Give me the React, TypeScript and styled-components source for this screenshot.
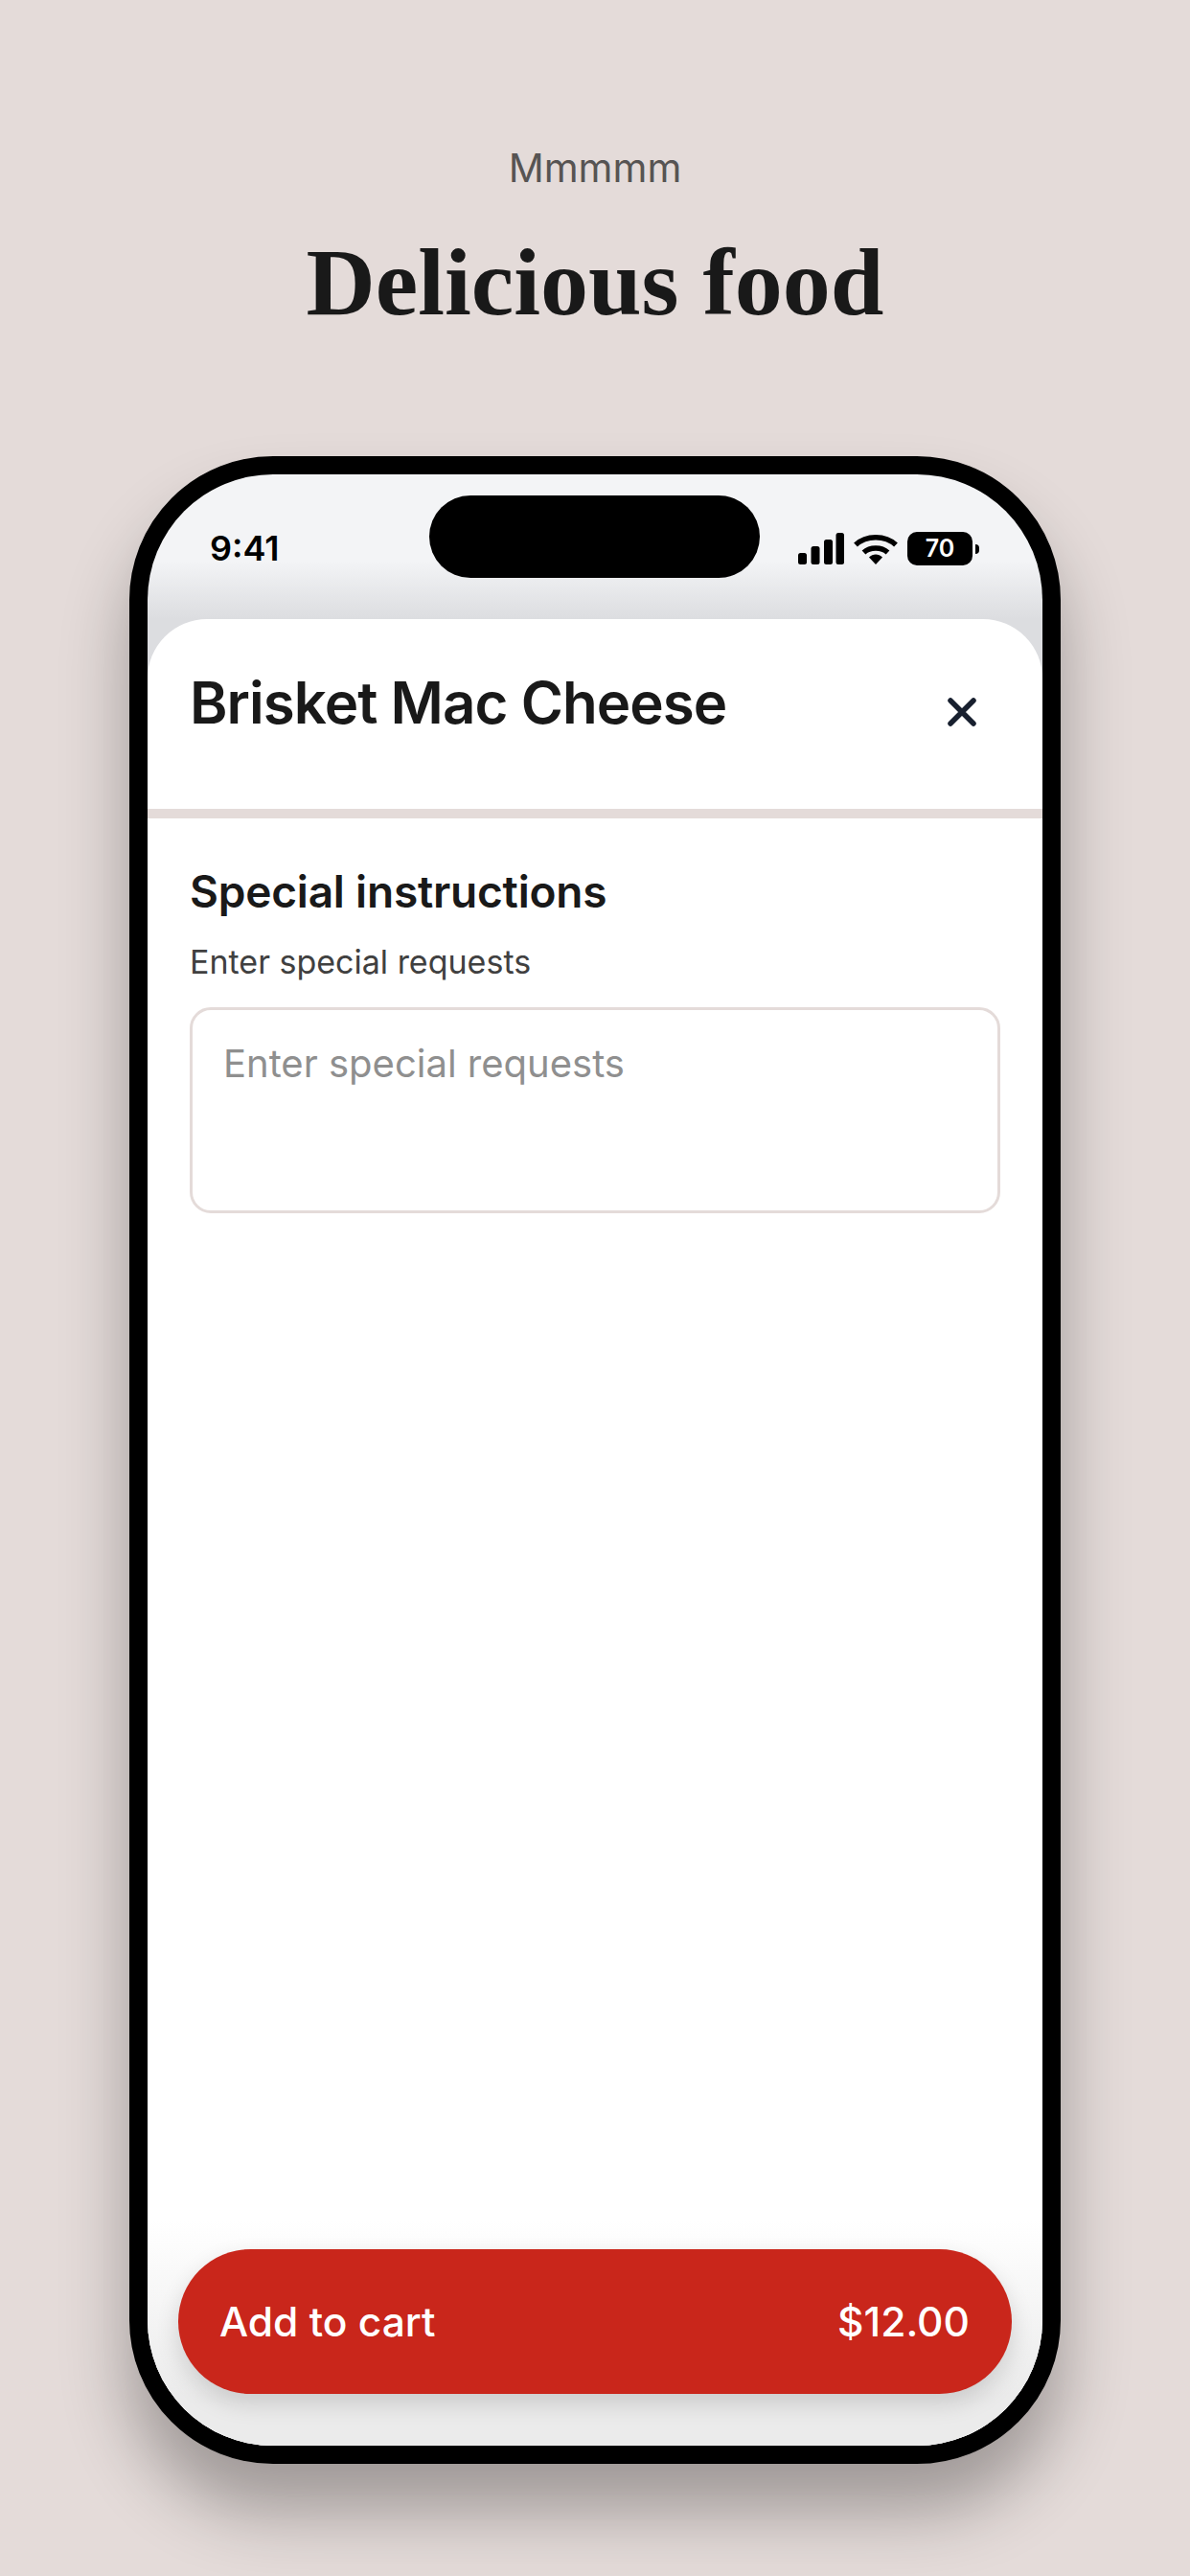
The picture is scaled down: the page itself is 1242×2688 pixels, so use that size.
import React from 'react';
import styled, { createGlobalStyle } from 'styled-components';

const GlobalStyle = createGlobalStyle`
  html, body {
    margin: 0;
    padding: 0;
    background: #e4dbd9;
  }
`;

const Page = styled.div`
  width: 1242px;
  height: 2688px;
  overflow: hidden;
  display: flex;
  flex-direction: column;
  align-items: center;
  background: #e4dbd9;
  font-family: Inter, 'Liberation Sans', sans-serif;
`;

const Eyebrow = styled.div`
  margin-top: 150px;
  height: 50px;
  line-height: 50px;
  font-size: 41px;
  color: #575453;
`;

const Headline = styled.h1`
  margin: 45px 0 0;
  height: 100px;
  line-height: 100px;
  font-family: 'Liberation Serif', serif;
  font-size: 100px;
  font-weight: 700;
  color: #191919;
`;

const Phone = styled.div`
  margin-top: 131px;
  width: 972px;
  height: 2095px;
  box-sizing: border-box;
  border: 19px solid #000;
  border-radius: 150px;
  background: #000;
  box-shadow: 0 50px 70px rgba(0, 0, 0, 0.3);
  flex-shrink: 0;
`;

const Screen = styled.div`
  position: relative;
  height: 100%;
  display: flex;
  flex-direction: column;
  overflow: hidden;
  border-radius: 131px;
  background: linear-gradient(180deg, #f3f4f6 0, #f3f4f6 90px, #dcdde0 151px);
`;

const StatusBar = styled.div`
  height: 151px;
  flex-shrink: 0;
  box-sizing: border-box;
  padding: 55px 73px 0 65px;
  display: flex;
  justify-content: space-between;
  align-items: flex-start;
`;

const Clock = styled.span`
  font-size: 36px;
  line-height: 44px;
  font-weight: 600;
  color: #000;
`;

const Island = styled.div`
  position: absolute;
  top: 22px;
  left: 294px;
  width: 345px;
  height: 86px;
  border-radius: 43px;
  background: #000;
`;

const StatusIcons = styled.div`
  display: flex;
  align-items: center;
  gap: 10px;
  margin-top: 5px;
`;

const Battery = styled.div`
  position: relative;
  width: 68px;
  height: 35px;
  border-radius: 10px;
  background: #000;
  color: #fff;
  font-size: 25px;
  font-weight: 600;
  line-height: 35px;
  text-align: center;
  &::after {
    content: '';
    position: absolute;
    right: -7px;
    top: 13px;
    width: 4px;
    height: 10px;
    border-radius: 0 5px 5px 0;
    background: #000;
  }
`;

const Sheet = styled.div`
  flex: 1;
  display: flex;
  flex-direction: column;
  background: #fff;
  border-radius: 62px 62px 0 0;
`;

const SheetHeader = styled.div`
  height: 208px;
  box-sizing: border-box;
  padding: 51px 68px 0 44px;
  display: flex;
  justify-content: space-between;
  align-items: flex-start;
  border-bottom: 10px solid #e4dbd9;
`;

const SheetTitle = styled.h2`
  margin: 0;
  font-size: 60px;
  letter-spacing: -0.95px;
  line-height: 72px;
  font-weight: 600;
  color: #191919;
`;

const CloseButton = styled.button`
  width: 32px;
  height: 32px;
  margin: 30px 0 0;
  padding: 0;
  border: 0;
  background: none;
  color: #18202f;
  display: flex;
`;

const SheetBody = styled.div`
  padding: 49px 44px 0;
  display: flex;
  flex-direction: column;
`;

const SectionTitle = styled.h3`
  margin: 0;
  font-size: 46px;
  letter-spacing: -0.2px;
  line-height: 54px;
  font-weight: 600;
  color: #191919;
`;

const FieldLabel = styled.label`
  margin-top: 27px;
  font-size: 34px;
  line-height: 40px;
  color: #404040;
`;

const RequestInput = styled.textarea`
  margin-top: 27px;
  height: 215px;
  box-sizing: border-box;
  padding: 32px 32px;
  border: 3px solid #e4dbd9;
  border-radius: 22px;
  resize: none;
  outline: none;
  font-family: inherit;
  font-size: 40px;
  line-height: 48px;
  color: #191919;
  &::placeholder {
    color: #8f8f8f;
    opacity: 1;
  }
`;

const Footer = styled.div`
  position: absolute;
  left: 0;
  right: 0;
  bottom: 0;
  padding: 30px 32px 54px;
  background: linear-gradient(180deg, rgba(235, 235, 235, 0) 0, #ebebeb 78%);
`;

const CartButton = styled.button`
  width: 100%;
  height: 151px;
  padding: 0 44px 0 43px;
  border: 0;
  border-radius: 76px;
  background: #c9261b;
  color: #fff;
  display: flex;
  justify-content: space-between;
  align-items: center;
  font-family: inherit;
  font-size: 42.5px;
  font-weight: 500;
  box-shadow: 0 10px 24px rgba(0, 0, 0, 0.14);
`;

const App = () => (
  <Page>
    <GlobalStyle />
    <Eyebrow>Mmmmm</Eyebrow>
    <Headline>Delicious food</Headline>
    <Phone>
      <Screen>
        <Island />
        <StatusBar>
          <Clock>9:41</Clock>
          <StatusIcons>
            <svg width="48" height="33" viewBox="0 0 48 33" fill="#000">
              <rect x="0" y="21" width="9" height="12" rx="2.5" />
              <rect x="13.5" y="14" width="9" height="19" rx="2.5" />
              <rect x="27" y="7" width="9" height="26" rx="2.5" />
              <rect x="39.5" y="0" width="8.5" height="33" rx="2.5" />
            </svg>
            <svg width="46" height="33" viewBox="0 0 46 33" fill="none" stroke="#000">
              <path d="M2 12.5C13 2 33 2 44 12.5" strokeWidth="5.5" />
              <path d="M10.5 20.5C17 14.5 29 14.5 35.5 20.5" strokeWidth="5.5" />
              <path d="M16 25.5C20 21.5 26 21.5 30 25.5L23 33Z" fill="#000" stroke="none" />
            </svg>
            <Battery>70</Battery>
          </StatusIcons>
        </StatusBar>
        <Sheet>
          <SheetHeader>
            <SheetTitle>Brisket Mac Cheese</SheetTitle>
            <CloseButton aria-label="Close">
              <svg width="32" height="32" viewBox="0 0 32 32" fill="none" stroke="currentColor" strokeWidth="5.5" strokeLinecap="round">
                <path d="M4 4L28 28M28 4L4 28" />
              </svg>
            </CloseButton>
          </SheetHeader>
          <SheetBody>
            <SectionTitle>Special instructions</SectionTitle>
            <FieldLabel>Enter special requests</FieldLabel>
            <RequestInput placeholder="Enter special requests" />
          </SheetBody>
        </Sheet>
        <Footer>
          <CartButton>
            <span>Add to cart</span>
            <span>$12.00</span>
          </CartButton>
        </Footer>
      </Screen>
    </Phone>
  </Page>
);

export default App;
